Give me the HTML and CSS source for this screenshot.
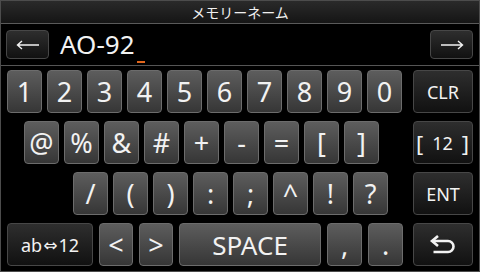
FILE: index.html
```html
<!DOCTYPE html>
<html lang="ja">
<head>
<meta charset="utf-8">
<title>メモリーネーム</title>
<link rel="stylesheet" href="styles.css">
</head>
<body>
<div class="screen">
  <div class="title">メモリーネーム</div>
  <div class="input-row">
    <div class="fkey arrow">
      <svg width="24" height="10" viewBox="0 0 24 10"><path d="M1.5 5H23M6 1L1.5 5L6 9" fill="none" stroke="#f2f2f2" stroke-width="1.4"/></svg>
    </div>
    <div class="field"><span class="text">AO-92</span><span class="cursor"></span></div>
    <div class="fkey arrow">
      <svg width="24" height="10" viewBox="0 0 24 10"><path d="M22.5 5H1M18 1L22.5 5L18 9" fill="none" stroke="#f2f2f2" stroke-width="1.4"/></svg>
    </div>
  </div>
  <div class="kbd">
    <div class="row">
      <div class="key">1</div><div class="key">2</div><div class="key">3</div><div class="key">4</div><div class="key">5</div>
      <div class="key">6</div><div class="key">7</div><div class="key">8</div><div class="key">9</div><div class="key">0</div>
      <div class="fkey side">CLR</div>
    </div>
    <div class="row r2">
      <div class="key">@</div><div class="key">%</div><div class="key">&amp;</div><div class="key">#</div><div class="key">+</div>
      <div class="key">-</div><div class="key">=</div><div class="key">[</div><div class="key">]</div>
      <div class="fkey side bracket"><span class="br">[</span><span>12</span><span class="br">]</span></div>
    </div>
    <div class="row r3">
      <div class="key">/</div><div class="key">(</div><div class="key">)</div><div class="key">:</div>
      <div class="key">;</div><div class="key">^</div><div class="key">!</div><div class="key">?</div>
      <div class="fkey side">ENT</div>
    </div>
    <div class="row r4">
      <div class="fkey mode">ab<span class="dbl">⇔</span>12</div>
      <div class="key narrow">&lt;</div><div class="key narrow">&gt;</div>
      <div class="key space">SPACE</div>
      <div class="key">,</div><div class="key">.</div>
      <div class="fkey side">
        <svg width="30" height="24" viewBox="0 0 30 24"><path d="M4 8H20a5.5 5.5 0 0 1 0 11H5.5" fill="none" stroke="#f2f2f2" stroke-width="2.6"/><path d="M10 3L4 8l6 5" fill="none" stroke="#f2f2f2" stroke-width="2.6"/></svg>
      </div>
    </div>
  </div>
</div>
</body>
</html>
```

FILE: styles.css
```css
html, body {
  margin: 0;
  background: #000;
}

.screen {
  width: 480px;
  height: 272px;
  box-sizing: border-box;
  border: 1px solid #4c4c4c;
  display: flex;
  flex-direction: column;
  overflow: hidden;
  color: #f2f2f2;
  font-family: "Noto Sans", "DejaVu Sans", sans-serif;
}

.title {
  height: 22px;
  border-bottom: 1px solid #5a5a5a;
  background: linear-gradient(#2a2a2a, #151515);
  text-align: center;
  font: 14px/22px "Noto Sans CJK JP", sans-serif;
  color: #f0f0f0;
}

.input-row {
  height: 41px;
  border-bottom: 1px solid #555;
  display: flex;
  align-items: center;
  padding: 0 6px 0 5px;
}

.fkey {
  box-sizing: border-box;
  border: 1px solid #474747;
  border-radius: 4px;
  background: linear-gradient(#2e2e2e, #111);
  display: flex;
  align-items: center;
  justify-content: center;
  font-size: 18px;
}

.arrow {
  width: 43px;
  height: 29px;
}

.field {
  flex: 1;
  height: 29px;
  padding-left: 11px;
  display: flex;
  align-items: center;
}

.text {
  font-size: 26px;
  line-height: 26px;
  margin-top: -2px;
}

.cursor {
  width: 8px;
  height: 2px;
  margin-left: 2px;
  background: #e2661c;
  align-self: flex-end;
  margin-bottom: -4px;
}

.kbd {
  flex: 1;
  display: flex;
  flex-direction: column;
  gap: 8px;
  padding: 4px 6px 0 6px;
}

.row {
  height: 43px;
  display: flex;
  gap: 5px;
}

.r2 { padding-left: 17px; }
.r3 { padding-left: 66px; }
.r4 { gap: 6px; }

.key {
  width: 35px;
  height: 43px;
  box-sizing: border-box;
  border: 1px solid #6c6c6c;
  border-radius: 4px;
  background: linear-gradient(#5d5d5d, #363636);
  display: flex;
  align-items: center;
  justify-content: center;
  font-size: 27px;
}

.key.narrow { width: 34px; }
.key.space { width: 142px; font-size: 26px; }

.side {
  margin-left: auto;
  width: 60px;
  height: 43px;
}

.bracket {
  justify-content: space-between;
  padding: 0 3px 0 2px;
}

.bracket .br {
  font-size: 22px;
}

.mode {
  width: 86px;
  height: 43px;
}

.dbl {
  font-family: "DejaVu Sans", sans-serif;
  font-size: 17px;
  margin: 0 1px;
}
```
